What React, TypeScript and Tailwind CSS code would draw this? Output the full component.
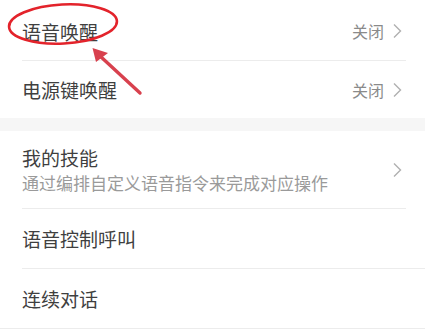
import React from "react";

const Chevron = () => (
  <svg width="10" height="16" viewBox="0 0 10 16" className="shrink-0">
    <path d="M2 1.5 L8.5 8 L2 14.5" fill="none" stroke="#b0b0b0" strokeWidth="1.4" />
  </svg>
);

export default function App() {
  return (
    <div
      className="relative w-[425px] h-[329px] overflow-hidden bg-white"
      style={{ fontFamily: '"Noto Sans CJK SC", "Noto Sans", sans-serif' }}
    >
      <div className="flex flex-col">
        <div className="h-[60px] flex items-center justify-between pl-[22px] pr-[23px] pt-[2px]">
          <span className="text-[19px] text-[#3f3f3f] leading-none">语音唤醒</span>
          <div className="flex items-center gap-[8px]">
            <span className="text-[16px] text-[#8a8a8a] leading-none">关闭</span>
            <Chevron />
          </div>
        </div>
        <div className="h-px bg-[#ececec] ml-[22px] mr-[19px]" />
        <div className="h-[57px] flex items-center justify-between pl-[22px] pr-[23px]">
          <span className="text-[19px] text-[#3f3f3f] leading-none">电源键唤醒</span>
          <div className="flex items-center gap-[8px]">
            <span className="text-[16px] text-[#8a8a8a] leading-none">关闭</span>
            <Chevron />
          </div>
        </div>
        <div className="h-[13px] bg-[#f6f6f6]" />
        <div className="h-[77px] flex items-center justify-between pl-[22px] pr-[23px]">
          <div className="flex flex-col gap-[7px]">
            <span className="text-[19px] text-[#3f3f3f] leading-[19px]">我的技能</span>
            <span className="text-[17px] text-[#9a9a9a] leading-[17px]">
              通过编排自定义语音指令来完成对应操作
            </span>
          </div>
          <Chevron />
        </div>
        <div className="h-px bg-[#ececec] ml-[22px] mr-[19px]" />
        <div className="h-[59px] flex items-center pl-[22px]">
          <span className="text-[19px] text-[#3f3f3f] leading-none">语音控制呼叫</span>
        </div>
        <div className="h-px bg-[#ececec] ml-[22px]" />
        <div className="h-[59px] flex items-center pl-[22px]">
          <span className="text-[19px] text-[#3f3f3f] leading-none">连续对话</span>
        </div>
        <div className="h-px bg-[#ececec]" />
      </div>

      <svg
        className="absolute left-0 top-0 pointer-events-none"
        width="425"
        height="329"
        viewBox="0 0 425 329"
      >
        <ellipse
          cx="63"
          cy="24"
          rx="54"
          ry="19.5"
          fill="none"
          stroke="#e3232b"
          strokeWidth="2.6"
          transform="rotate(-3 63 24)"
        />
        <line x1="140" y1="93" x2="100" y2="56" stroke="#d8414e" strokeWidth="3.4" strokeLinecap="round" />
        <polygon points="92.5,48 108,53 96,62" fill="#d8414e" />
      </svg>
    </div>
  );
}
